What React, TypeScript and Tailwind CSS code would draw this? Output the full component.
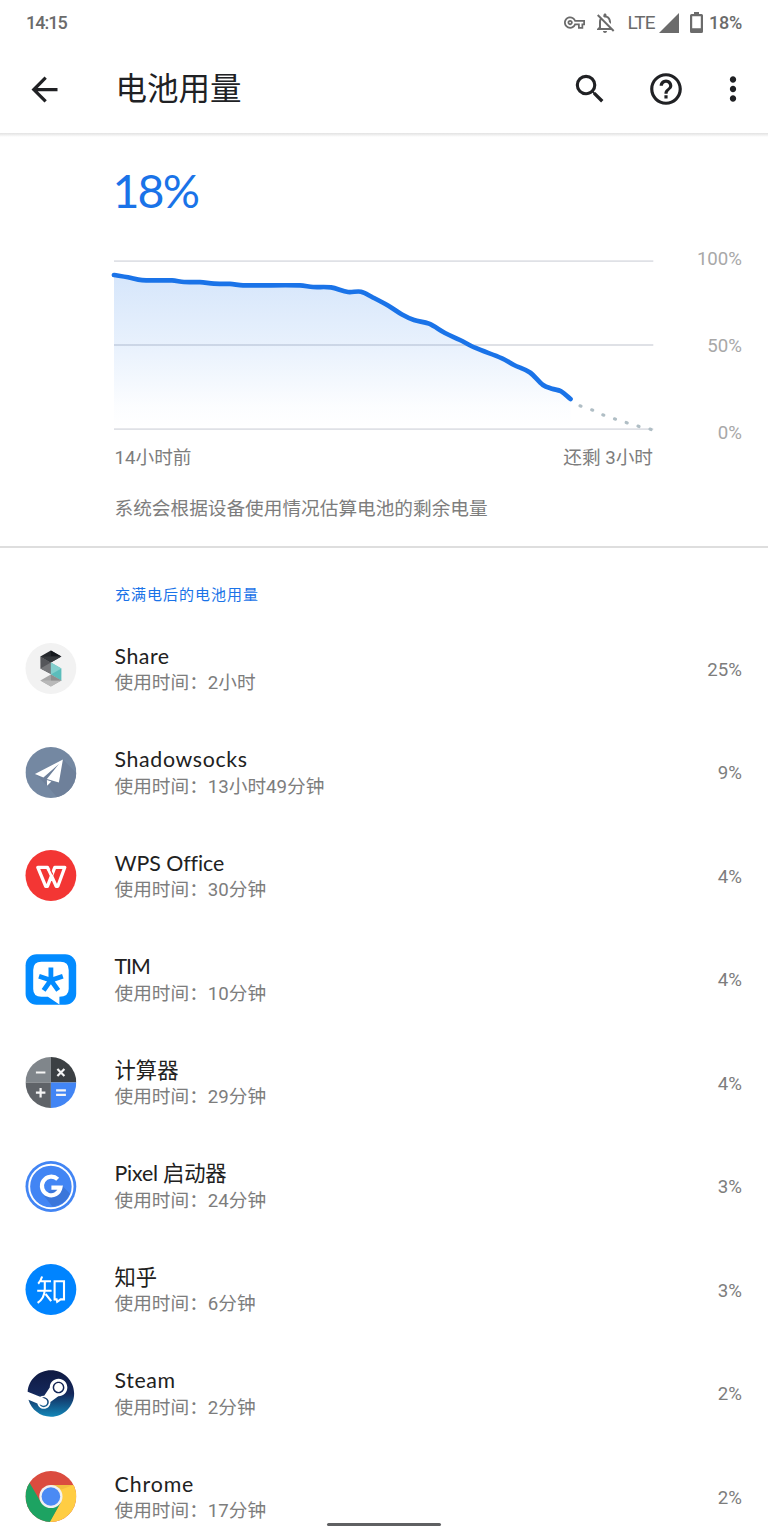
import type { ReactNode } from "react";
import {
  MdArrowBack,
  MdHelpOutline,
  MdMoreVert,
  MdOutlineNotificationsOff,
  MdOutlineVpnKey,
  MdSearch,
} from "react-icons/md";
import { FaSteam } from "react-icons/fa";

type Point = [number, number];

const LEVELS: Point[] = [
  [114, 275], [128, 277.3], [142, 280.2], [172, 280.4], [184, 282], [200, 282.2],
  [214, 283.7], [230, 283.9], [243, 285.3], [300, 285.4], [313, 287], [331, 287.4],
  [348, 292], [361, 291.7], [372, 297], [388, 305.5], [402, 314.5], [414, 320],
  [429, 323.7], [445, 333], [460, 340], [475, 347.7], [502, 358.3], [514, 365],
  [530, 372.5], [543, 385], [552, 388.8], [561, 391.3], [570.5, 399],
];

const FORECAST: Point[] = [
  [580.5, 406], [592.2, 410], [603.3, 415], [615, 419], [626.7, 422.7], [638.5, 426.3], [650.5, 429.3],
];

function smooth(points: Point[]): string {
  let d = `M${points[0][0]} ${points[0][1]}`;
  for (let i = 0; i < points.length - 1; i++) {
    const a = points[i];
    const b = points[i + 1];
    const before = points[i - 1] ?? a;
    const after = points[i + 2] ?? b;
    const third = (b[0] - a[0]) / 3;
    const slopeA = (b[1] - before[1]) / (b[0] - before[0]);
    const slopeB = (after[1] - a[1]) / (after[0] - a[0]);
    d += `C${a[0] + third} ${a[1] + third * slopeA} ${b[0] - third} ${b[1] - third * slopeB} ${b[0]} ${b[1]}`;
  }
  return d;
}

function BatteryChart() {
  const line = smooth(LEVELS);
  return (
    <svg className="block h-[190px] w-[550px]" viewBox="109 245 550 190">
      <defs>
        <linearGradient id="level" x1="0" y1="275" x2="0" y2="429" gradientUnits="userSpaceOnUse">
          <stop offset="0" stopColor="#1a73e8" stopOpacity="0.18" />
          <stop offset="0.4" stopColor="#1a73e8" stopOpacity="0.11" />
          <stop offset="0.85" stopColor="#1a73e8" stopOpacity="0.015" />
          <stop offset="1" stopColor="#1a73e8" stopOpacity="0" />
        </linearGradient>
      </defs>
      <g stroke="#dfe1e6" strokeWidth="1.8">
        <path d="M114 261.1H653.3M114 345H653.3M114 429.2H653.3" />
      </g>
      <path d={`${line}V429H114Z`} fill="url(#level)" />
      <path d={line} fill="none" stroke="#1a73e8" strokeWidth="4.7" strokeLinecap="round" />
      {FORECAST.map(([x, y]) => (
        <rect key={x} x={x - 2.1} y={y - 1.6} width="4.2" height="3.2" rx="1.4" fill="#b0bec5" transform={`rotate(19 ${x} ${y})`} />
      ))}
    </svg>
  );
}

function Icon({ children }: { children: ReactNode }) {
  return (
    <svg viewBox="-0.4 0 51 51" className="size-[51px] shrink-0 overflow-visible">
      {children}
    </svg>
  );
}

const ShareIcon = () => (
  <Icon>
    <circle cx="25.5" cy="25.5" r="25.4" fill="#f2f2f2" />
    <path d="M15 13.5L25.5 19.5V31L15 25.5Z" fill="#55565a" />
    <path d="M25.5 19.5V31L15 25.5Z" fill="#77787b" />
    <path d="M15 13.5L25.5 7.5L36 13.5L25.5 19.5Z" fill="#25282d" />
    <path d="M25.5 7.5L36 13.5H25.5Z" fill="#14171c" />
    <path d="M15 13.5H36L25.5 19.5Z" fill="#34373b" />
    <path d="M25.5 19.5L36 25.5V38L25.5 31.5Z" fill="#5bbdbb" />
    <path d="M25.5 19.5L36 25.5L25.5 31.5Z" fill="#83cfcd" />
    <path d="M15 37.5L25.5 31.5L36 37.5L25.5 43.5Z" fill="#a7a7a7" />
    <path d="M15 37.5H36L25.5 43.5Z" fill="#b9b9b9" />
    <path d="M25.5 31.5L36 37.5H25.5Z" fill="#8e8e8e" />
  </Icon>
);

const ShadowsocksIcon = () => (
  <Icon>
    <defs>
      <clipPath id="ss"><circle cx="25.5" cy="25.5" r="25.4" /></clipPath>
    </defs>
    <g clipPath="url(#ss)">
      <path d="M0 0H51V51H0Z" fill="#7488a2" />
      <path d="M37.5 12.5L60 35V60H40L21.7 38.7L10 27Z" fill="#6e809a" />
    </g>
    <path d="M37.5 12.5L9.5 27L18 30.5L33.5 17L21.5 32L33.5 35.5Z" fill="#fff" />
    <path d="M21.5 33L26 34.5L21.7 38.7Z" fill="#fff" />
  </Icon>
);

const WpsIcon = () => (
  <Icon>
    <circle cx="25.5" cy="25.5" r="25.4" fill="#f33634" />
    <path
      d="M23.6 20.6L22 17.3H12.4L20.3 36.3H22L29.4 17.3H39.4L32.4 36.3H30.8L23.2 19.4"
      fill="none"
      stroke="#fff"
      strokeWidth="3.3"
      strokeLinejoin="round"
    />
    <path d="M24.9 19.5L27.4 24.5" stroke="#f33634" strokeWidth="1.1" />
  </Icon>
);

const TimIcon = () => (
  <Icon>
    <rect x="0.2" y="0.2" width="50.6" height="50.6" rx="11" fill="#028bff" />
    <path d="M16 7.7H35Q43.3 7.7 43.3 16V35Q43.3 42.8 34 42.8V50.6L22.5 42.8H16Q7.8 42.8 7.8 35V16Q7.8 7.7 16 7.7Z" fill="#fff" />
    <path d="M25.5 26.2V13.5M25.5 26.2L13.6 22.3M25.5 26.2L37.4 22.3M25.5 26.2L18.2 36.4M25.5 26.2L32.8 36.4" stroke="#028bff" strokeWidth="4.8" />
  </Icon>
);

const CalculatorIcon = () => (
  <Icon>
    <defs>
      <clipPath id="calc"><circle cx="25.5" cy="25.5" r="25.4" /></clipPath>
    </defs>
    <g clipPath="url(#calc)">
      <path d="M0 0H25.5V25.5H0Z" fill="#80868b" />
      <path d="M25.5 0H51V25.5H25.5Z" fill="#3c4043" />
      <path d="M0 25.5H25.5V51H0Z" fill="#5f6368" />
      <path d="M25.5 25.5H51V51H25.5Z" fill="#4285f4" />
    </g>
    <path d="M10.5 15.5H20M32 12L39 19M39 12L32 19M10.5 35.7H20M15.2 31V40.5M30.7 33.4H40.5M30.7 37.9H40.5" stroke="#f5f5f5" strokeWidth="2.2" />
  </Icon>
);

const PixelIcon = () => (
  <Icon>
    <circle cx="25.5" cy="25.5" r="25.4" fill="#4285f4" />
    <circle cx="25.5" cy="25.5" r="21.7" fill="none" stroke="#fff" strokeWidth="1.9" />
    <path d="M36 24L44.5 32.5A20.3 20.3 0 0 1 27 45.5L17.5 33.5Z" fill="#3b76da" />
    <path d="M32.3 18.3A9.3 9.3 0 1 0 35 26.7H26" fill="none" stroke="#fff" strokeWidth="4.2" />
  </Icon>
);

const ZhihuIcon = () => (
  <Icon>
    <circle cx="25.5" cy="25.5" r="25.4" fill="#0084ff" />
    <path
      d="M16.7 12.5Q15.4 17 12.8 19.7M15.6 17.2H25.6M11.8 26.8H26.2M19.4 17.2V25Q19.1 34.5 12.2 38.8M20.2 30L25.8 37.2M29.2 17.2H38.6V35.4H35.2L31.8 37.8L31.2 35.4H29.2Z"
      fill="none"
      stroke="#fff"
      strokeWidth="2.1"
    />
  </Icon>
);

const SteamIcon = () => (
  <Icon>
    <defs>
      <linearGradient id="steam" x1="0" y1="0" x2="0" y2="1">
        <stop offset="0" stopColor="#101a42" />
        <stop offset="0.5" stopColor="#14275a" />
        <stop offset="1" stopColor="#1387b8" />
      </linearGradient>
    </defs>
    <circle cx="25.5" cy="25.5" r="22.6" fill="#fff" />
    <FaSteam x="1.5" y="1.5" size={48} fill="url(#steam)" />
  </Icon>
);

const ChromeIcon = () => (
  <Icon>
    <defs>
      <clipPath id="chrome"><circle cx="25.5" cy="25.5" r="25.4" /></clipPath>
    </defs>
    <g clipPath="url(#chrome)">
      <path d="M0 0H51V51H0Z" fill="#db4c3f" />
      <path d="M25.5 14H51V51H24L35.5 31Z" fill="#ffcd43" />
      <path d="M4 11.5L15.5 31.2L25.5 37L35.5 31.2L24.5 51H0V11.5Z" fill="#1da362" />
      <path d="M25.5 14H48L36 18.5Z" fill="#d9a63a" opacity="0.35" />
    </g>
    <circle cx="25.5" cy="25.5" r="11.6" fill="#f1f1f1" />
    <circle cx="25.5" cy="25.5" r="9.3" fill="#4a8af4" />
  </Icon>
);

const APPS = [
  { name: "Share", time: "2小时", percent: "25%", icon: <ShareIcon />, tracking: "tracking-[0.5px]" },
  { name: "Shadowsocks", time: "13小时49分钟", percent: "9%", icon: <ShadowsocksIcon />, tracking: "tracking-[0.65px]" },
  { name: "WPS Office", time: "30分钟", percent: "4%", icon: <WpsIcon />, tracking: "tracking-[-0.05px]" },
  { name: "TIM", time: "10分钟", percent: "4%", icon: <TimIcon />, tracking: "tracking-[-1px]" },
  { name: "计算器", time: "29分钟", percent: "4%", icon: <CalculatorIcon />, tracking: "tracking-normal" },
  { name: "Pixel 启动器", time: "24分钟", percent: "3%", icon: <PixelIcon />, tracking: "tracking-[-0.2px]" },
  { name: "知乎", time: "6分钟", percent: "3%", icon: <ZhihuIcon />, tracking: "tracking-normal" },
  { name: "Steam", time: "2分钟", percent: "2%", icon: <SteamIcon />, tracking: "tracking-[0.6px]" },
  { name: "Chrome", time: "17分钟", percent: "2%", icon: <ChromeIcon />, tracking: "tracking-[0.9px]" },
];

function StatusBar() {
  return (
    <div className="flex h-[45px] shrink-0 items-center pr-[26px] pl-[26px] text-[18px] font-medium text-[#6b6b6b]">
      <span className="leading-none tracking-[-1px]">14:15</span>
      <div className="ml-auto flex items-center">
        <MdOutlineVpnKey className="size-[21px]" />
        <MdOutlineNotificationsOff className="ml-[8px] size-[24px]" />
        <span className="ml-[10px] text-[19px] leading-none font-normal tracking-[-0.8px]">LTE</span>
        <svg className="ml-[4px] size-[20px]" viewBox="0 0 20 20">
          <path d="M20 0V20H0Z" fill="#6b6b6b" />
        </svg>
        <svg className="ml-[11px] h-[21px] w-[13px]" viewBox="0 0 13 21">
          <path d="M4 0H9V2H11.5Q13 2 13 3.5V19.5Q13 21 11.5 21H1.5Q0 21 0 19.5V3.5Q0 2 1.5 2H4ZM2.2 4.3V16.2H10.8V4.3Z" fill="#6b6b6b" fillRule="evenodd" />
        </svg>
        <span className="ml-[6px] leading-none tracking-[-0.2px]">18%</span>
      </div>
    </div>
  );
}

export default function App() {
  return (
    <div className="relative flex h-[1536px] w-[768px] flex-col overflow-hidden bg-white font-['Roboto','Noto_Sans_CJK_SC',sans-serif] text-[#212121]">
      <StatusBar />
      <header className="flex h-[88px] shrink-0 items-center pl-[25px] text-[#202124]">
        <MdArrowBack className="size-[39px]" />
        <h1 className="ml-[51.5px] pt-[2px] text-[31.5px] leading-none">电池用量</h1>
        <MdSearch className="ml-auto size-[38px]" />
        <MdHelpOutline className="ml-[38px] size-[38px]" />
        <MdMoreVert className="mr-[16px] ml-[29px] size-[38px]" />
      </header>
      <div className="h-[4px] shrink-0 bg-linear-to-b from-[#e2e2e2] to-white" />

      <section className="flex h-[411px] shrink-0 flex-col border-b-2 border-[#dedede] pr-[26px]">
        <p className="mt-[27px] ml-[112.5px] h-[53px] shrink-0 font-['Lato',sans-serif] text-[46.5px] leading-[53px] tracking-[-1.9px] text-[#1a73e8]">18%</p>
        <div className="mt-[28px] ml-[109px] flex shrink-0 justify-between">
          <BatteryChart />
          <div className="mt-[2px] flex h-[198px] flex-col justify-between text-right text-[18.67px] leading-[24px] text-[#a8a8a8]">
            <span>100%</span>
            <span>50%</span>
            <span>0%</span>
          </div>
        </div>
        <div className="ml-[114.5px] flex w-[538.5px] shrink-0 justify-between text-[18.67px] leading-[26px] text-[#7d7d7d]">
          <span>14小时前</span>
          <span>还剩 3小时</span>
        </div>
        <p className="mt-[25px] ml-[114.5px] text-[18.67px] leading-[26px] text-[#7d7d7d]">系统会根据设备使用情况估算电池的剩余电量</p>
      </section>

      <h2 className="mt-[36px] ml-[115px] h-[22px] shrink-0 text-[15px] leading-[22px] tracking-[1px] text-[#1a73e8]">充满电后的电池用量</h2>
      <ul className="mt-[11px] shrink-0">
        {APPS.map((app) => (
          <li key={app.name} className="flex h-[103.5px] items-center pr-[26px] pl-[25px]">
            {app.icon}
            <div className="ml-[38.5px] flex-1 pt-[1px]">
              <div className={`h-[27.5px] font-['Lato','Noto_Sans_CJK_SC',sans-serif] text-[21.33px] leading-[26px] text-[#212121] ${app.tracking}`}>
                {app.name}
              </div>
              <div className="h-[26px] text-[18.67px] leading-[26px] text-[#7d7d7d]">使用时间：{app.time}</div>
            </div>
            <span className="pt-[2px] text-[18.67px] text-[#7d7d7d]">{app.percent}</span>
          </li>
        ))}
      </ul>
      <div className="absolute top-[1523px] left-[327px] h-[3px] w-[114px] rounded-full bg-[#5f6062]" />
    </div>
  );
}
